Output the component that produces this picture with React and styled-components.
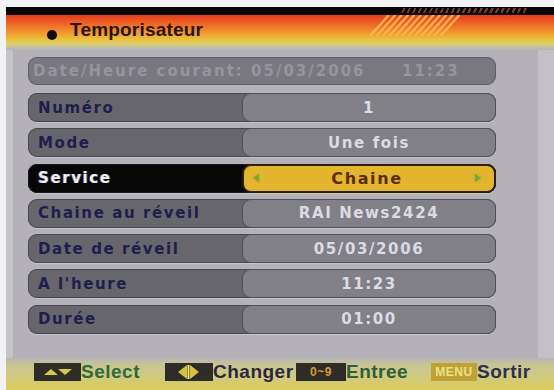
import React from 'react';
import styled, { createGlobalStyle } from 'styled-components';

const Global = createGlobalStyle`
  html, body { margin: 0; padding: 0; background: #ffffff; }
  body { width: 554px; height: 390px; overflow: hidden; }
  * { box-sizing: border-box; }
`;

const Frame = styled.div`
  width: 554px;
  height: 390px;
  padding: 7px 0 0 6px;
  background: #f2f1f4;
  display: flex;
`;

const Screen = styled.div`
  flex: 1;
  display: flex;
  flex-direction: column;
  background: #b4b2b8;
`;

const Header = styled.header`
  height: 43px;
  display: flex;
  flex-direction: column;
`;

const TopBar = styled.div`
  height: 8px;
  background: #070504;
  display: flex;
`;

const Hatch = styled.div`
  margin: 1px 0 0 394px;
  width: 127px;
  height: 5px;
  background: repeating-linear-gradient(115deg, transparent 0 3px, #8a4430 3px 5px);
  opacity: 0.85;
`;

const TitleBand = styled.div`
  flex: 1;
  display: flex;
  align-items: flex-start;
  padding: 5px 0 0 41px;
  background: linear-gradient(
    180deg,
    #e43c1e 0%,
    #ec5a24 18%,
    #f07e2a 38%,
    #f0a230 55%,
    #eac23e 70%,
    #dccf6a 82%,
    #c6c3a6 92%,
    #b4b2b8 100%
  );
`;

const Bullet = styled.span`
  width: 10px;
  height: 10px;
  margin-top: 10px;
  border-radius: 50%;
  background: #120a06;
  flex: none;
`;

const Title = styled.h1`
  margin: 0 0 0 13px;
  font-family: "Liberation Sans", Arial, sans-serif;
  font-weight: 700;
  font-size: 19px;
  line-height: 20px;
  color: #2a140c;
  letter-spacing: 0.2px;
`;

const Stripes = styled.svg`
  margin: -5px 86px 0 auto;
  flex: none;
`;

const Content = styled.main`
  flex: 1;
  border-left: 7px solid #c7c3cb;
  border-right: 16px solid #c3c1c7;
  padding: 7px 0 0 15px;
  display: flex;
  flex-direction: column;
`;

const CurrentRow = styled.div`
  width: 468px;
  height: 28px;
  margin-bottom: 8px;
  border-radius: 9px;
  background: #79777f;
  box-shadow: inset 0 0 0 1px rgba(70, 68, 76, 0.5);
  display: grid;
  grid-template-columns: 369px auto;
  align-items: center;
  padding-left: 5px;
  font-family: "DejaVu Sans", Verdana, sans-serif;
  font-weight: 700;
  font-size: 15px;
  letter-spacing: 2px;
  color: #96949d;
`;

const Rows = styled.div`
  display: flex;
  flex-direction: column;
  gap: 6.3px;
`;

const Row = styled.div`
  width: 468px;
  height: 29px;
  border-radius: 9px;
  display: flex;
  background: ${(p) => (p.$active ? '#070707' : '#67666c')};
  box-shadow: inset 0 0 0 1px ${(p) => (p.$active ? '#1a1a1a' : 'rgba(60,58,66,0.7)')},
    0 1px 0 rgba(214, 212, 222, 0.55);
  font-family: "DejaVu Sans", Verdana, sans-serif;
  font-weight: 700;
  font-size: 15px;
  letter-spacing: 1.6px;
`;

const Label = styled.div`
  flex: 0 0 214px;
  display: flex;
  align-items: center;
  padding-left: 10px;
  color: ${(p) => (p.$active ? '#eeedf4' : '#1e1e4c')};
  text-shadow: ${(p) => (p.$active ? '1px 0 0 rgba(120,200,255,0.35), -1px 0 0 rgba(255,140,160,0.35)' : 'none')};
`;

const Value = styled.div`
  flex: 1;
  display: flex;
  align-items: center;
  justify-content: ${(p) => (p.$active ? 'space-between' : 'center')};
  padding: ${(p) => (p.$active ? '0 13px 0 9px' : '0')};
  border-radius: 9px;
  background: ${(p) => (p.$active ? '#e3b42e' : '#818087')};
  border: ${(p) => (p.$active ? '2px solid #2c2107' : '1px solid rgba(66,64,72,0.75)')};
  color: ${(p) => (p.$active ? '#5a2c08' : '#dcdbe4')};
  font-size: ${(p) => (p.$active ? '16px' : '15px')};
`;

const Arrow = styled.span`
  width: 0;
  height: 0;
  border-top: 4px solid transparent;
  border-bottom: 4px solid transparent;
  ${(p) => (p.$dir === 'left' ? 'border-right: 6px solid #7ea436;' : 'border-left: 6px solid #7ea436;')}
  filter: drop-shadow(0 0 1px rgba(120, 170, 60, 0.8));
`;

const Footer = styled.footer`
  height: 32px;
  display: grid;
  grid-template-columns: 131px 131px 135px auto;
  align-items: center;
  padding: 0 0 4px 28px;
  background: linear-gradient(180deg, #b7b5b3 0%, #c9c594 22%, #d1ca7e 60%, #dacc58 100%);
`;

const FooterItem = styled.div`
  display: flex;
  align-items: center;
`;

const Badge = styled.span`
  width: ${(p) => p.$w}px;
  height: 18px;
  flex: none;
  display: flex;
  align-items: center;
  justify-content: center;
  background: ${(p) => (p.$gold ? '#bfa233' : '#2e2c27')};
  color: ${(p) => (p.$gold ? '#ece08c' : '#d89a34')};
  font-family: "Liberation Sans", Arial, sans-serif;
  font-weight: 700;
  font-size: 12px;
  letter-spacing: 0.5px;
`;

const FooterLabel = styled.span`
  font-family: "Liberation Sans", Arial, sans-serif;
  font-weight: 700;
  font-size: 19px;
  line-height: 20px;
  letter-spacing: 0.5px;
  color: ${(p) => p.$color};
`;

const rows = [
  { label: 'Numéro', value: '1' },
  { label: 'Mode', value: 'Une fois' },
  { label: 'Service', value: 'Chaine', active: true },
  { label: 'Chaine au réveil', value: 'RAI News2424' },
  { label: 'Date de réveil', value: '05/03/2006' },
  { label: "A l'heure", value: '11:23' },
  { label: 'Durée', value: '01:00' },
];

function StripesArt() {
  const lines = [];
  for (let i = 0; i < 12; i++) {
    const xb = 2 + i * 6.4;
    lines.push(
      <line key={i} x1={xb} y1={21} x2={xb + 19} y2={0} stroke="#f9b654" strokeWidth="2.4" opacity="0.9" />
    );
  }
  return (
    <Stripes width="100" height="21" viewBox="0 0 100 21">
      {lines}
    </Stripes>
  );
}

function UpDown() {
  return (
    <svg width="47" height="18" viewBox="0 0 47 18">
      <polygon points="10,12 17,6 24,12" fill="#d6ca46" />
      <polygon points="24,6 38,6 31,12" fill="#d6ca46" />
    </svg>
  );
}

function LeftRight() {
  return (
    <svg width="48" height="18" viewBox="0 0 48 18">
      <polygon points="13,9 22,2 22,16" fill="#d6c23e" />
      <rect x="22.5" y="2" width="2" height="14" fill="#efe27a" />
      <polygon points="25,2 25,16 34,9" fill="#d6c23e" />
    </svg>
  );
}

export default function App() {
  return (
    <>
      <Global />
      <Frame>
        <Screen>
          <Header>
            <TopBar>
              <Hatch />
            </TopBar>
            <TitleBand>
              <Bullet />
              <Title>Temporisateur</Title>
              <StripesArt />
            </TitleBand>
          </Header>
          <Content>
            <CurrentRow>
              <span>Date/Heure courant: 05/03/2006</span>
              <span>11:23</span>
            </CurrentRow>
            <Rows>
              {rows.map((r) => (
                <Row key={r.label} $active={r.active}>
                  <Label $active={r.active}>{r.label}</Label>
                  <Value $active={r.active}>
                    {r.active && <Arrow $dir="left" />}
                    <span>{r.value}</span>
                    {r.active && <Arrow $dir="right" />}
                  </Value>
                </Row>
              ))}
            </Rows>
          </Content>
          <Footer>
            <FooterItem>
              <Badge $w={47}>
                <UpDown />
              </Badge>
              <FooterLabel $color="#2f6a3a">Select</FooterLabel>
            </FooterItem>
            <FooterItem>
              <Badge $w={48}>
                <LeftRight />
              </Badge>
              <FooterLabel $color="#2c2640">Changer</FooterLabel>
            </FooterItem>
            <FooterItem>
              <Badge $w={50}>0~9</Badge>
              <FooterLabel $color="#2e5e3a">Entree</FooterLabel>
            </FooterItem>
            <FooterItem>
              <Badge $w={46} $gold>MENU</Badge>
              <FooterLabel $color="#2a3050">Sortir</FooterLabel>
            </FooterItem>
          </Footer>
        </Screen>
      </Frame>
    </>
  );
}
